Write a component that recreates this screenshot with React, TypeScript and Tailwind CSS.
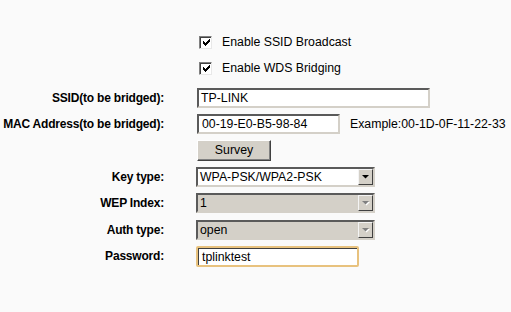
import React from "react";

const font = { fontFamily: '"Liberation Sans", Arial, sans-serif' };

const checkRows = [
  "......X",
  ".....XX",
  "X...XXX",
  "XX.XXX.",
  "XXXXX..",
  ".XXX...",
  "..X....",
];

function Check() {
  return (
    <div className="w-[13px] h-[13px] bg-white border border-t-[#808080] border-l-[#808080] border-b-[#e8e8e8] border-r-[#e8e8e8] flex items-center justify-center shadow-[inset_1px_1px_0_#404040]">
      <svg width="7" height="7" viewBox="0 0 7 7" className="ml-[1px] mt-[1px]" shapeRendering="crispEdges">
        {checkRows.map((r, y) =>
          r.split("").map((c, x) => (c === "X" ? <rect key={`${x}-${y}`} x={x} y={y} width="1" height="1" fill="#000" /> : null))
        )}
      </svg>
    </div>
  );
}

function Label({ children }: { children: React.ReactNode }) {
  return (
    <div className="w-[165px] shrink-0 whitespace-nowrap text-right font-bold text-[12px] tracking-[-0.2px] text-black pr-[1px]">{children}</div>
  );
}

const inset =
  "border-2 border-t-[#5a5a5a] border-l-[#5a5a5a] border-b-[#d4d0c8] border-r-[#d4d0c8]";

function Select({ value, disabled }: { value: string; disabled?: boolean }) {
  return (
    <div
      className={`w-[179px] h-[20px] flex items-stretch ${inset} ${disabled ? "bg-[#d4d0c8]" : "bg-white"}`}
    >
      <div className="flex-1 pl-[2px] text-[12.3px] leading-[16px] text-black whitespace-nowrap">{value}</div>
      <div className="w-[15px] bg-[#d4d0c8] border border-t-[#f4f4f4] border-l-[#f4f4f4] border-b-[#404040] border-r-[#404040] flex items-center justify-center">
        <svg width="8" height="5" viewBox="0 0 8 5">
          {disabled ? (
            <>
              <path d="M1 1 L8 1 L4.5 4.5 Z" fill="#fff" />
              <path d="M0 0 L7 0 L3.5 3.5 Z" fill="#808080" />
            </>
          ) : (
            <path d="M0 0 L7 0 L3.5 3.5 Z" fill="#000" />
          )}
        </svg>
      </div>
    </div>
  );
}

export default function App() {
  return (
    <div className="w-[511px] h-[312px] bg-[#fafafa] text-black text-[12.3px] overflow-hidden" style={font}>
      <div className="pt-[29px]">
        <div className="h-[26px] flex items-center pl-[199px]">
          <Check />
          <span className="ml-[10px]">Enable SSID Broadcast</span>
        </div>
        <div className="h-[26px] flex items-center pl-[199px]">
          <Check />
          <span className="ml-[10px]">Enable WDS Bridging</span>
        </div>

        <div className="mt-[4px] h-[26px] flex items-center">
          <Label>SSID(to be bridged):</Label>
          <div className={`ml-[32px] w-[233px] h-[20px] bg-white ${inset} pl-[2px] leading-[16px]`}>TP-LINK</div>
        </div>
        <div className="h-[26px] flex items-center">
          <Label>MAC Address(to be bridged):</Label>
          <div className={`ml-[32px] w-[143px] h-[20px] bg-white ${inset} pl-[3px] leading-[16px]`}>00-19-E0-B5-98-84</div>
          <span className="ml-[10px] whitespace-nowrap">Example:00-1D-0F-11-22-33</span>
        </div>
        <div className="h-[26px] flex items-center">
          <div className="w-[165px] shrink-0" />
          <div className="ml-[32px] w-[74px] h-[21px] bg-[#d4d0c8] border border-t-[#ffffff] border-l-[#ffffff] border-b-[#404040] border-r-[#404040] shadow-[inset_-1px_-1px_0_#808080] flex items-center justify-center">
            Survey
          </div>
        </div>

        <div className="mt-[1px] h-[26px] flex items-center">
          <Label>Key type:</Label>
          <div className="ml-[31px]">
            <Select value="WPA-PSK/WPA2-PSK" />
          </div>
        </div>
        <div className="h-[26px] flex items-center">
          <Label>WEP Index:</Label>
          <div className="ml-[31px]">
            <Select value="1" disabled />
          </div>
        </div>
        <div className="mt-[1px] h-[26px] flex items-center">
          <Label>Auth type:</Label>
          <div className="ml-[31px]">
            <Select value="open" disabled />
          </div>
        </div>
        <div className="h-[26px] flex items-center">
          <Label>Password:</Label>
          <div className="ml-[31px] w-[163px] h-[21px] rounded-[2px] border-2 border-[#e8c27e] bg-white">
            <div className="h-full border-t border-l border-t-[#404040] border-l-[#404040] pl-[3px] leading-[16px]">tplinktest</div>
          </div>
        </div>
      </div>
    </div>
  );
}
